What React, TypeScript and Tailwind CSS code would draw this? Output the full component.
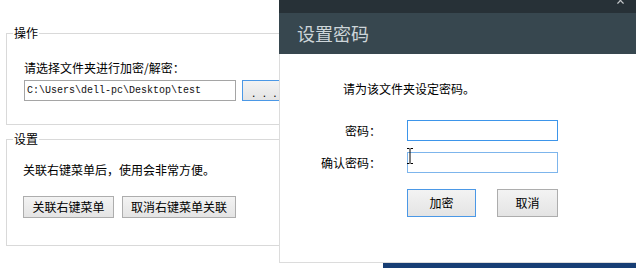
import { X } from 'lucide-react';

const cjk = "font-['Noto_Sans_CJK_SC',sans-serif]";

function GroupBox({ label, className, children }: { label: string; className: string; children: React.ReactNode }) {
  return (
    <div className={`relative ml-[6px] w-[320px] border border-[#d9d9d9] ${className}`}>
      <span className="absolute left-[6px] -top-[8px] bg-white px-[1px] text-[12px] leading-[14px] text-black">
        {label}
      </span>
      {children}
    </div>
  );
}

function WinButton({ children, focused, className }: { children: React.ReactNode; focused?: boolean; className: string }) {
  return (
    <button
      className={`flex items-center border bg-gradient-to-b from-[#f3f3f3] to-[#e4e4e4] text-[12px] leading-[14px] text-black ${
        focused ? 'border-[#4b98e6]' : 'border-[#adadad]'
      } ${className}`}
    >
      {children}
    </button>
  );
}

export default function App() {
  return (
    <div className={`relative h-[268px] w-[636px] overflow-hidden bg-white ${cjk}`}>
      {/* main window */}
      <div className="pt-[33px]">
        <GroupBox label="操作" className="h-[92px] pl-[17px] pt-[27px]">
          <p className="text-[12px] leading-[14px] text-black">请选择文件夹进行加密/解密：</p>
          <div className="mt-[5px] flex gap-[6px]">
            <div className="flex h-[21px] w-[212px] items-center border border-[#a5a5a5] pl-[2px] font-['Liberation_Mono',monospace] text-[10px] text-[#111]">
              C:\Users\dell-pc\Desktop\test
            </div>
            <WinButton focused className="h-[21px] w-[75px] justify-start pl-[9px] pt-[4px] font-['Liberation_Sans',sans-serif] text-[10px] tracking-[2px]">
              . . .
            </WinButton>
          </div>
        </GroupBox>

        <GroupBox label="设置" className="mt-[14px] h-[107px] pl-[16px] pt-[23px]">
          <p className="text-[12px] leading-[14px] text-black">关联右键菜单后，使用会非常方便。</p>
          <div className="mt-[19px] flex gap-[8px]">
            <WinButton className="h-[22px] w-[91px] justify-center">关联右键菜单</WinButton>
            <WinButton className="h-[22px] w-[114px] justify-center">取消右键菜单关联</WinButton>
          </div>
        </GroupBox>
      </div>

      {/* window behind the dialog */}
      <div className="absolute bottom-0 left-[383px] h-[5px] w-[253px] bg-[#173e74]" />

      {/* password dialog */}
      <div className="absolute left-[279px] top-0 flex w-[357px] flex-col">
        <div className="relative h-[13px] bg-[#273137]">
          <X size={11} strokeWidth={2.5} className="absolute -top-[5px] left-[336px] text-[#c4c8ca]" />
        </div>
        <div className="flex h-[41px] items-center bg-[#37474f] pb-[2px] pl-[18px] text-[18px] leading-[20px] text-[#cdd5d9]">
          设置密码
        </div>
        <div className="relative h-[209px] border-b border-l border-[#dcdcdc] bg-white pl-[63px] pt-[28px]">
          <p className="text-[12px] leading-[14px] text-black">请为该文件夹设定密码。</p>
          <div className="-ml-[63px] mt-[24px] grid grid-cols-[101px_151px] items-center gap-x-[26px] gap-y-[11px]">
            <span className="text-right text-[12px] leading-[14px] text-black">密码：</span>
            <div className="h-[21px] border border-[#3d95ea]" />
            <span className="text-right text-[12px] leading-[14px] text-black">确认密码：</span>
            <div className="h-[21px] border border-[#7db5ec]" />
          </div>
          <div className="ml-[64px] mt-[16px] flex gap-[21px]">
            <WinButton focused className="h-[28px] w-[69px] justify-center">加密</WinButton>
            <WinButton className="h-[28px] w-[61px] justify-center">取消</WinButton>
          </div>

          {/* text cursor */}
          <svg className="absolute left-[126px] top-[94px]" width="8" height="16" viewBox="0 0 8 16">
            <path d="M1 0.5h2.5M4.5 0.5H7M1 15.5h2.5M4.5 15.5H7M4 1v14" stroke="#000" strokeWidth="1" fill="none" />
          </svg>
        </div>
      </div>
    </div>
  );
}
